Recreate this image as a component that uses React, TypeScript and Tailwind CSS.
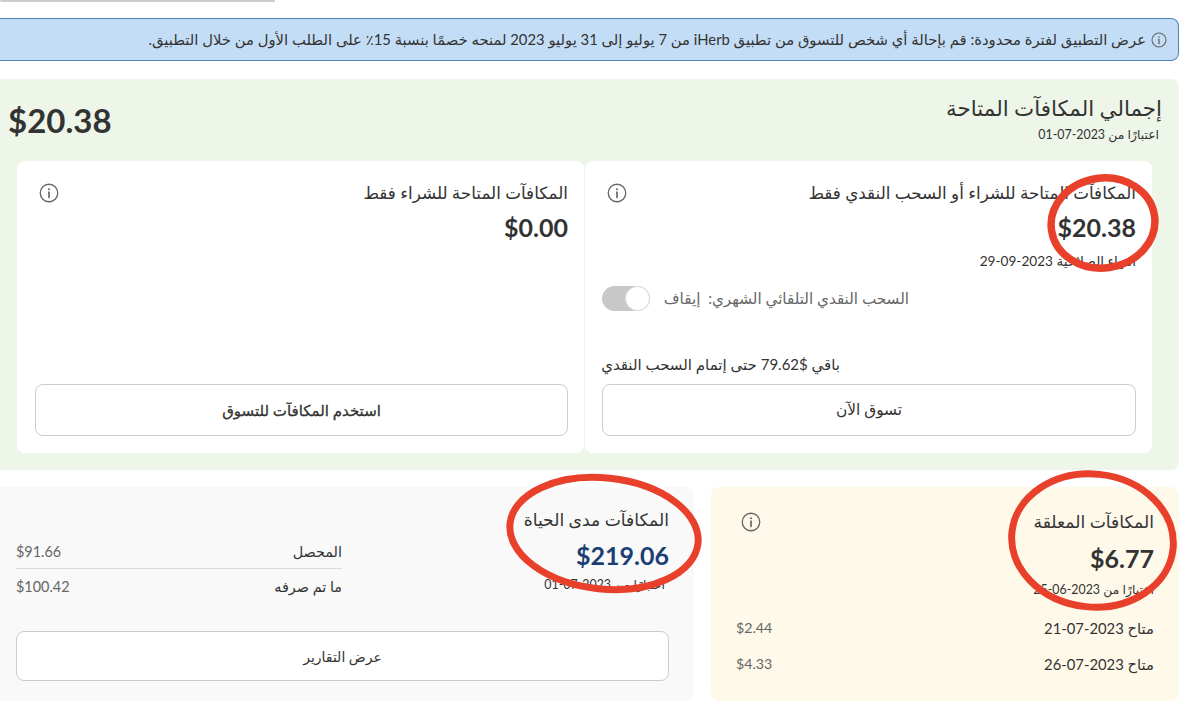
import React from 'react';

const InfoIcon = ({ size = 20 }: { size?: number }) => (
  <svg width={size} height={size} viewBox="0 0 24 24" fill="none" stroke="#666666" strokeWidth="1.6" strokeLinecap="round" className="shrink-0">
    <circle cx="12" cy="12" r="10.5" />
    <path d="M12 11v6.5" strokeWidth="2" />
    <circle cx="12" cy="7.4" r="1.2" fill="#666666" stroke="none" />
  </svg>
);

const OutlineButton = ({ label, className = '' }: { label: string; className?: string }) => (
  <button className={`flex items-center justify-center rounded-lg border border-[#cccccc] bg-white text-[#333333] ${className}`}>
    {label}
  </button>
);

/**
 * Rewards summary page with hand-drawn red circles over it
 */
export default function App() {
  return (
    <div dir="rtl" className="relative flex h-[716px] w-[1200px] flex-col overflow-hidden bg-white pr-[21px] text-[#333333] [font-family:Lato,'DejaVu_Sans',sans-serif]">
      <div className="h-[2px] w-[275px] self-end rounded-bl bg-[#cccccc]" />

      {/* Banner */}
      <div className="mt-[16px] flex h-[43px] items-center gap-[5px] rounded-tr-lg rounded-br-lg border-y border-r border-[#4f82b8] bg-[#c3ddf6] pr-[11px] text-[14.8px] text-[#333333]">
        <InfoIcon size={16} />
        <span>عرض التطبيق لفترة محدودة: قم بإحالة أي شخص للتسوق من تطبيق iHerb من 7 يوليو إلى 31 يوليو 2023 لمنحه خصمًا بنسبة 15٪ على الطلب الأول من خلال التطبيق.</span>
      </div>

      {/* Total available */}
      <section className="mt-[18px] h-[391px] rounded-r-lg bg-[#edf6e8] pt-[14px] pr-[27px] pl-[17px]">
        <div className="relative flex h-[68px] items-start justify-between">
          <div className="-mr-[10px]">
            <h2 className="text-[21.4px] leading-[30px]">إجمالي المكافآت المتاحة</h2>
            <p className="mt-[4px] pr-[3px] text-[12.4px] leading-[16px]">اعتبارًا من 2023-07-01</p>
          </div>
          <div className="-ml-[9px] mt-[6px] text-[33px] leading-[42px] font-bold">$20.38</div>
        </div>

        <div className="grid grid-cols-2 gap-px">
          {/* Purchase or cash-out */}
          <div className="flex h-[292px] flex-col rounded-lg bg-white pt-[21px] pr-[16px] pl-[17px]">
            <div className="flex items-center justify-between pl-[5px]">
              <h3 className="text-[16.8px] leading-[22px]">المكافآت المتاحة للشراء أو السحب النقدي فقط</h3>
              <InfoIcon />
            </div>
            <div className="mt-[8px] text-[25px] leading-[30px] font-bold">$20.38</div>
            <p className="mt-[11px] text-[13.6px] leading-[16px]">انتهاء الصلاحية 2023-09-29</p>
            <div className="mt-[17px] flex w-[307px] items-center gap-[10px] self-end">
              <span className="text-[15.2px] whitespace-nowrap text-[#666666]">السحب النقدي التلقائي الشهري: &nbsp;إيقاف</span>
              <span className="relative mr-auto h-[25px] w-[48px] shrink-0 rounded-full bg-[#c8c8c8]">
                <span className="absolute top-0 left-[23px] size-[25px] rounded-full border border-[#dddddd] bg-white" />
              </span>
            </div>
            <p className="mt-[43px] w-[238px] self-end text-[15px] leading-[20px] whitespace-nowrap">باقي $79.62 حتى إتمام السحب النقدي</p>
            <OutlineButton label="تسوق الآن" className="mt-[10px] h-[52px] w-full text-[15.4px]" />
          </div>

          {/* Purchase only */}
          <div className="flex h-[292px] flex-col rounded-lg bg-white pt-[21px] pr-[16px] pb-[17px] pl-[16px]">
            <div className="flex items-center justify-between pl-[6px]">
              <h3 className="text-[16.8px] leading-[22px]">المكافآت المتاحة للشراء فقط</h3>
              <InfoIcon />
            </div>
            <div className="mt-[8px] text-[25px] leading-[30px] font-bold">$0.00</div>
            <OutlineButton label="استخدم المكافآت للتسوق" className="mt-auto h-[52px] w-[533px] text-[15px] [-webkit-text-stroke:0.3px_#333333]" />
          </div>
        </div>
      </section>

      {/* Bottom row */}
      <div className="mt-[17px] flex h-[214px] gap-[17px]">
        {/* Pending */}
        <section className="w-[468px] shrink-0 rounded-lg bg-[#fff9ea] pt-[24px] pr-[25px] pl-[25px]">
          <div className="flex items-center justify-between pl-[5px]">
            <h3 className="text-[17.2px] leading-[22px]">المكافآت المعلقة</h3>
            <InfoIcon />
          </div>
          <div className="mt-[10px] text-[25px] leading-[30px] font-bold">$6.77</div>
          <p className="mt-[9px] text-[12.4px] leading-[16px]">اعتبارًا من 2023-06-25</p>
          <div className="mt-[20px] flex items-center justify-between text-[14.8px] leading-[20px]">
            <span>متاح 2023-07-21</span>
            <span className="text-[14.2px] text-[#666666]">$2.44</span>
          </div>
          <div className="mt-[16px] flex items-center justify-between text-[14.8px] leading-[20px]">
            <span>متاح 2023-07-26</span>
            <span className="text-[14.2px] text-[#666666]">$4.33</span>
          </div>
        </section>

        {/* Lifetime */}
        <section className="flex flex-1 flex-col rounded-r-lg bg-[#f9f9f9] pt-[22px] pr-[25px] pb-[20px] pl-[16px]">
          <div className="flex justify-between">
            <div>
              <h3 className="text-[17.2px] leading-[22px]">المكافآت مدى الحياة</h3>
              <div className="mt-[8px] text-[25px] leading-[32px] font-bold text-[#1b3f73]">$219.06</div>
              <p className="mt-[6px] pr-[4px] text-[12.4px] leading-[16px]">اعتبارًا من 2023-07-01</p>
            </div>
            <div className="mt-[30px] w-[326px] text-[14.4px]">
              <div className="flex h-[30px] items-center justify-between border-b border-[#dddddd] pb-[4px]">
                <span>المحصل</span>
                <span className="text-[#666666]">$91.66</span>
              </div>
              <div className="flex h-[36px] items-center justify-between">
                <span>ما تم صرفه</span>
                <span className="text-[#666666]">$100.42</span>
              </div>
            </div>
          </div>
          <OutlineButton label="عرض التقارير" className="mt-auto h-[50px] w-full text-[14px]" />
        </section>
      </div>

      {/* Red marker circles drawn over the page */}
      <svg width="1200" height="716" viewBox="0 0 1200 716" fill="none" stroke="#e8402a" className="pointer-events-none absolute top-0 left-0">
        <ellipse cx="1103" cy="223" rx="52" ry="45" strokeWidth="7.5" transform="rotate(-8 1103 223)" />
        <ellipse cx="604" cy="533.5" rx="94.5" ry="55.5" strokeWidth="7" transform="rotate(6 604 533.5)" />
        <ellipse cx="1092.5" cy="540.5" rx="81" ry="66.5" strokeWidth="7" transform="rotate(6 1092.5 540.5)" />
      </svg>
    </div>
  );
}
